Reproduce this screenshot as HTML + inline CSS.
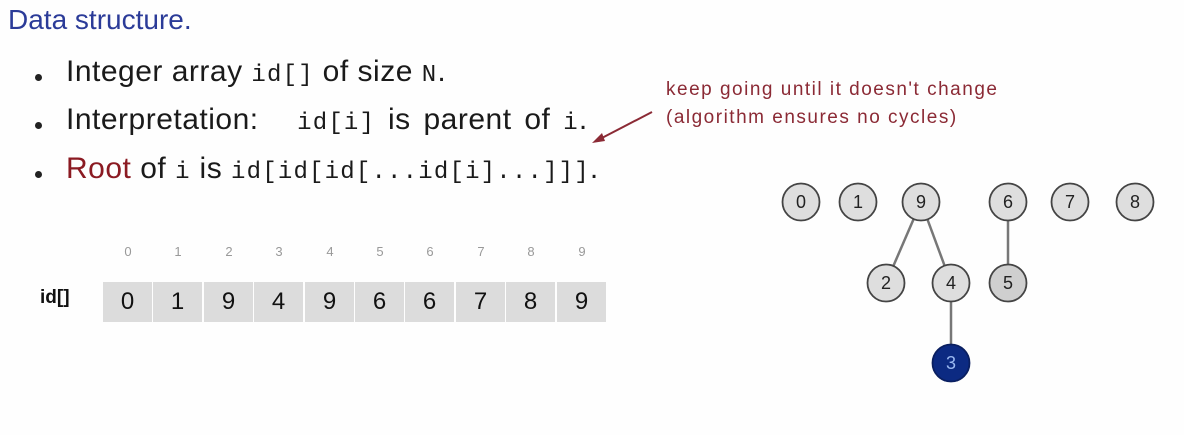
<!DOCTYPE html>
<html><head><style>
body{margin:0;width:1184px;height:435px;background:#fefefe;position:relative;overflow:hidden;font-family:"Liberation Sans",sans-serif;}
.t{position:absolute;white-space:nowrap;}
.m{font-family:"Liberation Mono",monospace;font-size:24px;letter-spacing:1.2px}
.b{font-size:30px;color:#1a1a1a;letter-spacing:0.5px}
.dot{position:absolute;width:7px;height:7px;border-radius:50%;background:#222;left:35px}
.cell{position:absolute;top:282px;width:49px;height:40px;background:#dcdcdc;font-size:24px;text-align:center;line-height:40px;color:#111}
.idx{position:absolute;top:244px;width:50px;text-align:center;font-size:13px;color:#999}
</style></head><body>
<div class="t" style="left:8px;top:4px;font-size:28px;color:#2b3b98">Data structure.</div>
<div class="dot" style="top:74px"></div>
<div class="dot" style="top:122px"></div>
<div class="dot" style="top:171px"></div>
<div class="t b" style="left:66px;top:55px">Integer array <span class="m">id[]</span> of size <span class="m">N</span>.</div>
<div class="t b" style="left:66px;top:103px;word-spacing:4px">Interpretation:&nbsp;&nbsp; <span class="m">id[i]</span> is parent of <span class="m">i</span>.</div>
<div class="t b" style="left:66px;top:152px"><span style="color:#8b1a22">Root</span> of <span class="m">i</span> is <span class="m">id[id[id[...id[i]...]]]</span>.</div>
<div class="t" style="left:666px;top:76px;font-size:19px;color:#8b2a35;line-height:28px;letter-spacing:1.5px">keep going until it doesn't change<br>(algorithm ensures no cycles)</div>
<svg style="position:absolute;left:0;top:0" width="1184" height="435">
<line x1="652" y1="112" x2="598" y2="140" stroke="#8b2a35" stroke-width="2"/>
<polygon points="592,143 602,133 605,141" fill="#8b2a35"/>
<g stroke="#777" stroke-width="2.5">
<line x1="921" y1="202" x2="886" y2="283"/><line x1="921" y1="202" x2="951" y2="283"/>
<line x1="1008" y1="202" x2="1008" y2="283"/><line x1="951" y1="283" x2="951" y2="363"/>
</g>
<g fill="#dedede" stroke="#444" stroke-width="1.8">
<circle cx="801" cy="202" r="18.5"/><circle cx="858" cy="202" r="18.5"/><circle cx="921" cy="202" r="18.5"/>
<circle cx="1008" cy="202" r="18.5"/><circle cx="1070" cy="202" r="18.5"/><circle cx="1135" cy="202" r="18.5"/>
<circle cx="886" cy="283" r="18.5"/><circle cx="951" cy="283" r="18.5"/><circle cx="1008" cy="283" r="18.5" fill="#cfcfcf"/>
<circle cx="951" cy="363" r="18.5" fill="#0c2a82" stroke="#0a1f60"/>
</g>
<g font-family="Liberation Sans" font-size="18" text-anchor="middle" fill="#222">
<text x="801" y="208">0</text><text x="858" y="208">1</text><text x="921" y="208">9</text>
<text x="1008" y="208">6</text><text x="1070" y="208">7</text><text x="1135" y="208">8</text>
<text x="886" y="289">2</text><text x="951" y="289">4</text><text x="1008" y="289">5</text>
<text x="951" y="369" fill="#9ab8f0">3</text>
</g>
</svg>
<div class="t" style="left:40px;top:287px;font-size:19px;font-weight:bold;color:#111">id[]</div>
<div class="idx" style="left:103px">0</div><div class="idx" style="left:153px">1</div><div class="idx" style="left:204px">2</div><div class="idx" style="left:254px">3</div><div class="idx" style="left:305px">4</div><div class="idx" style="left:355px">5</div><div class="idx" style="left:405px">6</div><div class="idx" style="left:456px">7</div><div class="idx" style="left:506px">8</div><div class="idx" style="left:557px">9</div>
<div class="cell" style="left:103px">0</div><div class="cell" style="left:153px">1</div><div class="cell" style="left:204px">9</div><div class="cell" style="left:254px">4</div><div class="cell" style="left:305px">9</div><div class="cell" style="left:355px">6</div><div class="cell" style="left:405px">6</div><div class="cell" style="left:456px">7</div><div class="cell" style="left:506px">8</div><div class="cell" style="left:557px">9</div>
</body></html>
